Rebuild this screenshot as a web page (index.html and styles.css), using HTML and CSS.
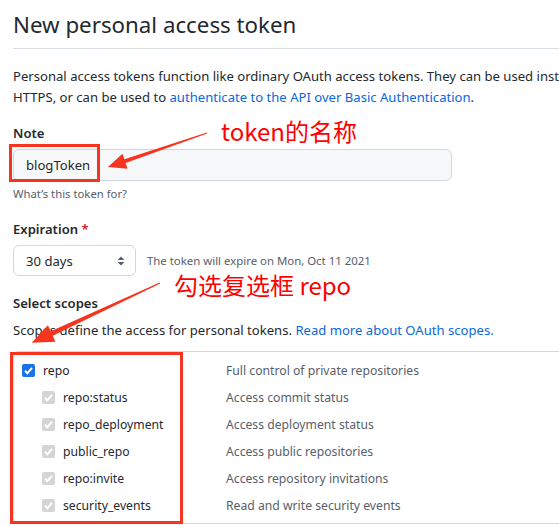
FILE: index.html
```html
<!DOCTYPE html>
<html>
<head>
<meta charset="utf-8">
<link rel="stylesheet" href="styles.css">
</head>
<body>
<div class="page">
  <div class="header"><h1 class="title">New personal access token</h1></div>
  <p class="intro">Personal access tokens function like ordinary OAuth access tokens. They can be used inst<br>HTTPS, or can be used to <a class="link" href="#">authenticate to the API over Basic Authentication</a>.</p>

  <div class="label label-note">Note</div>
  <div class="input"><span class="input-text">blogToken</span></div>
  <div class="hint">What’s this token for?</div>

  <div class="label label-exp">Expiration <span class="req">*</span></div>
  <div class="exp-row">
    <div class="select"><span>30 days</span>
      <svg class="caret" width="8" height="12" viewBox="0 0 8 12"><path d="M4 1.5 L7.5 5 L0.5 5 Z M4 10.5 L7.5 7 L0.5 7 Z" fill="#57606a"/></svg>
    </div>
    <span class="exp-note">The token will expire on Mon, Oct 11 2021</span>
  </div>

  <div class="label label-scopes">Select scopes</div>
  <p class="scopes-desc">Scopes define the access for personal tokens. <a class="link" href="#">Read more about OAuth scopes.</a></p>

  <div class="scopes">
    <div class="row">
      <div class="cell"><span class="cb cb-on"><svg width="13" height="13" viewBox="0 0 13 13"><path d="M3 6.8 L5.4 9.2 L10 3.8" fill="none" stroke="#fff" stroke-width="2"/></svg></span><span class="name name-top">repo</span></div>
      <div class="desc">Full control of private repositories</div>
    </div>
    <div class="row sub">
      <div class="cell"><span class="cb cb-dis"><svg width="13" height="13" viewBox="0 0 13 13"><path d="M3 6.8 L5.4 9.2 L10 3.8" fill="none" stroke="#fff" stroke-width="2"/></svg></span><span class="name">repo:status</span></div>
      <div class="desc">Access commit status</div>
    </div>
    <div class="row sub">
      <div class="cell"><span class="cb cb-dis"><svg width="13" height="13" viewBox="0 0 13 13"><path d="M3 6.8 L5.4 9.2 L10 3.8" fill="none" stroke="#fff" stroke-width="2"/></svg></span><span class="name">repo_deployment</span></div>
      <div class="desc">Access deployment status</div>
    </div>
    <div class="row sub">
      <div class="cell"><span class="cb cb-dis"><svg width="13" height="13" viewBox="0 0 13 13"><path d="M3 6.8 L5.4 9.2 L10 3.8" fill="none" stroke="#fff" stroke-width="2"/></svg></span><span class="name">public_repo</span></div>
      <div class="desc">Access public repositories</div>
    </div>
    <div class="row sub">
      <div class="cell"><span class="cb cb-dis"><svg width="13" height="13" viewBox="0 0 13 13"><path d="M3 6.8 L5.4 9.2 L10 3.8" fill="none" stroke="#fff" stroke-width="2"/></svg></span><span class="name">repo:invite</span></div>
      <div class="desc">Access repository invitations</div>
    </div>
    <div class="row sub">
      <div class="cell"><span class="cb cb-dis"><svg width="13" height="13" viewBox="0 0 13 13"><path d="M3 6.8 L5.4 9.2 L10 3.8" fill="none" stroke="#fff" stroke-width="2"/></svg></span><span class="name">security_events</span></div>
      <div class="desc">Read and write security events</div>
    </div>
  </div>
</div>

<svg class="annot" width="559" height="525" viewBox="0 0 559 525">
  <rect x="10.5" y="145.5" width="88" height="35" fill="none" stroke="#f7341f" stroke-width="3"/>
  <rect x="11.5" y="353.5" width="170" height="169" fill="none" stroke="#f7341f" stroke-width="3"/>
  <polygon points="207.2,133.5 125.6,163.1 127.6,168.7 108,167 122.4,153.7 124.4,159.3 206.8,132.5" fill="#f7341f"/>
  <polygon points="160.3,283.6 52.7,335.8 55.5,341.7 31.7,342.7 47.9,325.3 50.7,331.2 159.7,282.4" fill="#f7341f"/>
</svg>
<span class="annot-text annot-1">token的名称</span>
<span class="annot-text annot-2">勾选复选框 repo</span>
</body>
</html>
```
FILE: styles.css
```css
html, body {
  margin: 0;
  padding: 0;
  background: #fff;
  overflow: hidden;
}
body {
  width: 559px;
  height: 525px;
  position: relative;
  font-family: "Noto Sans", "Open Sans", "Noto Sans CJK SC", sans-serif;
  color: #24292f;
}
.page {
  padding-left: 13px;
  white-space: nowrap;
}
.header {
  padding-top: 7px;
  padding-bottom: 5px;
  border-bottom: 1px solid #d8dee4;
}
.title {
  margin: 0;
  font-size: 22.3px;
  font-weight: 400;
  line-height: 36px;
}
.intro {
  margin: 17px 0 0;
  font-size: 13.1px;
  line-height: 21px;
}
.link {
  color: #0969da;
  text-decoration: none;
}
.label {
  font-size: 13.1px;
  font-weight: 600;
  line-height: 21px;
}
.label-note { margin-top: 15px; }
.input {
  margin-top: 5px;
  width: 425px;
  height: 30px;
  border: 1px solid #d0d7de;
  border-radius: 6px;
  background: #f6f8fa;
  display: flex;
  align-items: center;
  padding-left: 12px;
  font-size: 13.1px;
}
.hint {
  margin-top: 4px;
  font-size: 11.3px;
  line-height: 18px;
  color: #57606a;
}
.label-exp { margin-top: 16px; }
.req { color: #cf222e; }
.exp-row {
  margin-top: 5px;
  display: flex;
  align-items: center;
  gap: 11px;
}
.select {
  height: 29px;
  border: 1px solid #d0d7de;
  border-radius: 6px;
  box-sizing: content-box;
  display: flex;
  align-items: center;
  justify-content: space-between;
  padding: 0 0 0 12px;
  width: 109px;
  font-size: 13.1px;
}
.caret { margin-right: 10px; }
.exp-note {
  font-size: 11.4px;
  color: #57606a;
}
.label-scopes { margin-top: 17px; }
.scopes-desc {
  margin: 6px 0 0;
  font-size: 13.1px;
  line-height: 21px;
}
.scopes {
  margin-top: 10px;
  border: 1px solid #d0d7de;
  border-right: 0;
  border-radius: 6px 0 0 6px;
  padding: 5px 0 4px;
}
.row {
  display: grid;
  grid-template-columns: 212px 1fr;
  height: 27px;
  align-items: center;
  font-size: 12.2px;
}
.cell {
  display: flex;
  align-items: center;
  gap: 8px;
  padding-left: 8px;
}
.sub .cell { padding-left: 28px; }
.cb {
  width: 13px;
  height: 13px;
  border-radius: 2px;
  display: block;
}
.cb svg { display: block; }
.cb-on { background: #1a73e8; }
.cb-dis { background: #d5d5d5; }
.name-top { font-weight: 400; color: #1f2328; }
.desc { color: #57606a; }
.annot {
  position: absolute;
  left: 0;
  top: 0;
  pointer-events: none;
}
.annot-text {
  position: absolute;
  font-family: "Noto Sans CJK SC", sans-serif;
  font-size: 24px;
  line-height: 30px;
  color: #ff0000;
  white-space: nowrap;
}
.annot-1 { left: 221px; top: 116px; }
.annot-2 { left: 174px; top: 270px; }
```
